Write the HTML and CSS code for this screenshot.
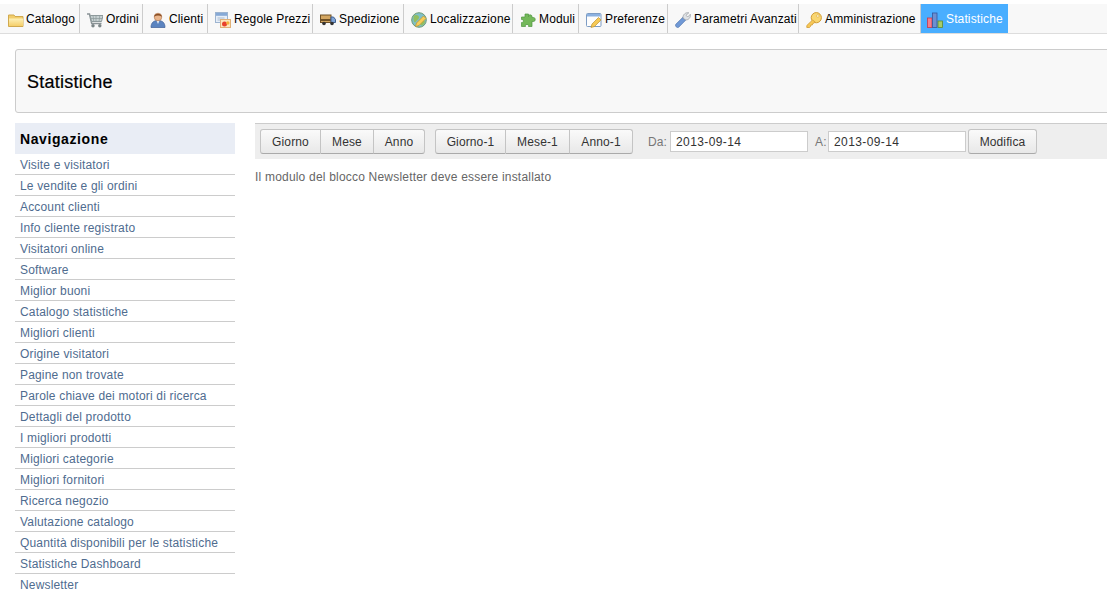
FILE: index.html
```html
<!DOCTYPE html>
<html lang="it">
<head>
<meta charset="utf-8">
<title>Statistiche</title>
<link rel="stylesheet" href="styles.css">
</head>
<body>
<nav class="tabs">
  <a class="tab"><svg class="ico" viewBox="0 0 16 16"><defs><linearGradient id="fold" x1="0" y1="0" x2="0" y2="1"><stop offset="0" stop-color="#fdf1b8"/><stop offset="1" stop-color="#f5cf6a"/></linearGradient></defs><path d="M.5 3h5.500l1 1.500h8v10H.5z" fill="#f2cd6b" stroke="#d0a94e"/><path d="M1 6.500h14v7.500H1z" fill="url(#fold)"/></svg>Catalogo</a>
  <a class="tab"><svg class="ico" viewBox="0 0 16 16"><path d="M0 2h2.500l2.200 9.500h9.800" fill="none" stroke="#8a9396" stroke-width="1.500"/><path d="M3.200 3.500H16l-1.500 6H4.500z" fill="#c7d1d2" stroke="#8d999b"/><path d="M6 3.500l.8 6M9 3.500v6M12.800 3.500l-.8 6M3.800 6.500h11.500" stroke="#8d999b" stroke-width=".7"/><circle cx="6" cy="13.800" r="1.700" fill="#7b8587"/><circle cx="12.800" cy="13.800" r="1.700" fill="#7b8587"/></svg>Ordini</a>
  <a class="tab"><svg class="ico" viewBox="0 0 16 16"><path d="M1 15.500c0-4.800 2.500-7 7-7s7 2.200 7 7z" fill="#5b84c0" stroke="#3d5f96" stroke-width=".7"/><path d="M6.500 8.500h3L8 12z" fill="#e8eef6"/><circle cx="8" cy="5" r="3.800" fill="#e9b58c" stroke="#a9714c" stroke-width=".6"/><path d="M4.200 4.800C4 .6 12 .6 11.800 4.800 9.500 3.200 6.500 3.200 4.200 4.800z" fill="#8a4f25"/></svg>Clienti</a>
  <a class="tab"><svg class="ico" viewBox="0 0 16 16"><rect x=".5" y=".5" width="12" height="10" fill="#e6eef8" stroke="#9db4d0"/><rect x="1" y="1" width="11" height="2.800" fill="#86a9d6"/><path d="M2.500 6h7M2.500 8h4" stroke="#a9bbd0"/><rect x="5.500" y="7.500" width="10" height="8" fill="#fce6bd" stroke="#e0b077"/><circle cx="9.500" cy="12" r="2.500" fill="#e8402c"/><circle cx="12.800" cy="11" r="1.700" fill="#f5b23c"/></svg>Regole Prezzi</a>
  <a class="tab"><svg class="ico" viewBox="0 0 16 16"><rect x=".5" y="3" width="10.500" height="7.500" fill="#d3a661" stroke="#6f5126"/><rect x=".5" y="7" width="10.500" height="2" fill="#6f5126"/><path d="M11 5h2.500l2 2.500v3H11z" fill="#7ea3d6" stroke="#3e5f8f"/><circle cx="4" cy="11.500" r="1.800" fill="#333"/><circle cx="12" cy="11.500" r="1.800" fill="#333"/></svg>Spedizione</a>
  <a class="tab"><svg class="ico" viewBox="0 0 16 16"><circle cx="8" cy="8" r="7.300" fill="#7fc0c8" stroke="#6f9a74"/><path d="M3 3.500c3-1.500 5 0 5 2S5.500 8 4.500 10 1.500 7 3 3.500zM10 9c2-1 4 0 4 1s-2 3.500-3.500 3.500S9 10 10 9z" fill="#93bf5f"/><path d="M4.500 14.500l1-3.500 7-7 2.500 2.500-7 7z" fill="#f7cd58" stroke="#c0922f" stroke-width=".7"/></svg>Localizzazione</a>
  <a class="tab"><svg class="ico" viewBox="0 0 16 16"><path d="M5 2h3.500v2.500c.2-2.500 4-2 3.500.5v.5h1.500c2.300 0 2.300 4 0 4H12v5H8.500c.8-2.800-3.800-2.800-3 0H1.500V10.500c2.500.8 2.500-3.800 0-3V5H5z" fill="#74b85a" stroke="#4f9540" stroke-width=".7"/></svg>Moduli</a>
  <a class="tab"><svg class="ico" viewBox="0 0 16 16"><rect x=".5" y="1.500" width="14.500" height="13" rx="1" fill="#fdfdfd" stroke="#7d9cc4"/><rect x="1" y="2" width="13.500" height="2.500" fill="#8cb1e0"/><path d="M5 15.500l1-3.500 6.500-6.500 2.500 2.500-6.500 6.500z" fill="#f6c955" stroke="#c0922f" stroke-width=".7"/></svg>Preferenze</a>
  <a class="tab"><svg class="ico" viewBox="0 0 16 16"><path d="M.8 12.300L8 5.200l2.800 2.800-7.100 7.200c-1.500 1.300-4.100-1.300-2.900-2.900z" fill="#7099d6" stroke="#4f75ad" stroke-width=".7"/><path d="M8 6C7.500 2.800 10.700 0 13.800.8L11 3.300l1.700 1.700 2.600-2.700c.8 3-2 6.300-5 5.500z" fill="#dfe2e5" stroke="#93989e" stroke-width=".7"/></svg>Parametri Avanzati</a>
  <a class="tab"><svg class="ico" viewBox="0 0 16 16"><circle cx="10.300" cy="5.700" r="5.100" fill="#f9d670" stroke="#d09c36"/><circle cx="11.800" cy="4" r="1.300" fill="#fff6cf" stroke="#d09c36" stroke-width=".5"/><path d="M6.500 8L.8 13.500v2h2.700l1-1 .3-1.500h1.500l.5-1.500 1.500-.5 1-1z" fill="#f7c856" stroke="#d09c36" stroke-width=".8"/></svg>Amministrazione</a>
  <a class="tab tab-active"><svg class="ico" viewBox="0 0 16 16"><rect x=".5" y="6" width="4.500" height="9.500" fill="#f27f8c" stroke="#c8374a" stroke-width=".8"/><rect x="5.500" y="1" width="4.500" height="14.500" fill="#6d8fd0" stroke="#35569c" stroke-width=".8"/><rect x="11" y="9" width="4.500" height="6.500" fill="#a6cb6a" stroke="#5f8a2e" stroke-width=".8"/></svg>Statistiche</a>
</nav>

<header class="page-head">
  <h1 class="page-title">Statistiche</h1>
</header>

<div class="layout">
  <aside class="side">
    <h2 class="side-title">Navigazione</h2>
    <ul class="side-list">
      <li><a>Visite e visitatori</a></li>
      <li><a>Le vendite e gli ordini</a></li>
      <li><a>Account clienti</a></li>
      <li><a>Info cliente registrato</a></li>
      <li><a>Visitatori online</a></li>
      <li><a>Software</a></li>
      <li><a>Miglior buoni</a></li>
      <li><a>Catalogo statistiche</a></li>
      <li><a>Migliori clienti</a></li>
      <li><a>Origine visitatori</a></li>
      <li><a>Pagine non trovate</a></li>
      <li><a>Parole chiave dei motori di ricerca</a></li>
      <li><a>Dettagli del prodotto</a></li>
      <li><a>I migliori prodotti</a></li>
      <li><a>Migliori categorie</a></li>
      <li><a>Migliori fornitori</a></li>
      <li><a>Ricerca negozio</a></li>
      <li><a>Valutazione catalogo</a></li>
      <li><a>Quantità disponibili per le statistiche</a></li>
      <li><a>Statistiche Dashboard</a></li>
      <li><a>Newsletter</a></li>
    </ul>
  </aside>
  <main class="content">
    <form class="toolbar">
      <div class="btn-group group-now">
        <button type="button" class="btn">Giorno</button>
        <button type="button" class="btn">Mese</button>
        <button type="button" class="btn">Anno</button>
      </div>
      <div class="btn-group group-prev">
        <button type="button" class="btn">Giorno-1</button>
        <button type="button" class="btn">Mese-1</button>
        <button type="button" class="btn">Anno-1</button>
      </div>
      <label class="date-label label-from">Da:</label>
      <input class="date" type="text" value="2013-09-14">
      <label class="date-label label-to">A:</label>
      <input class="date" type="text" value="2013-09-14">
      <button type="button" class="btn btn-solo">Modifica</button>
    </form>
    <p class="message">Il modulo del blocco Newsletter deve essere installato</p>
  </main>
</div>
</body>
</html>
```
FILE: styles.css
```css
* { box-sizing: border-box; }
html, body { height: 100%; }
body {
  margin: 0;
  padding-top: 4px;
  overflow: hidden;
  background: #fff;
  color: #666;
  font: 12px/15px "Liberation Sans", Arial, sans-serif;
  letter-spacing: .13px;
}
.tabs {
  display: grid;
  grid-template-columns: 80px 63px 65px 105px 91px 109px 66px 89px 131px 122px 87px;
  height: 30px;
  background: #f8f8f8;
  border-bottom: 1px solid #ddd;
}
.tab {
  display: flex;
  align-items: center;
  gap: 3px;
  padding: 2px 0 0 7px;
  border-right: 1px solid #ccc;
  color: #000;
  white-space: nowrap;
}
.tab:first-child { gap: 2px; padding-left: 8px; }
.ico { width: 16px; height: 16px; flex: none; }
.tab-active {
  background: #49aeff;
  color: #fff;
  border-right: 0;
  padding-left: 6px;
}
.page-head {
  display: flex;
  align-items: center;
  height: 64px;
  margin: 15px -20px 0 15px;
  padding: 2px 0 0 11px;
  background: #f8f8f8;
  border: 1px solid #ccc;
  border-radius: 3px;
}
.page-title {
  margin: 0;
  font-size: 18px;
  font-weight: 400;
  letter-spacing: .25px;
  color: #000;
  -webkit-text-stroke: .2px #000;
}
.layout {
  display: flex;
  gap: 20px;
  margin: 10px 0 0 15px;
}
.side { width: 220px; flex: none; }
.side-title {
  margin: 0;
  height: 31px;
  padding: 1px 0 0 5px;
  background: #e9edf5;
  color: #000;
  font-size: 14px;
  line-height: 31px;
  font-weight: 700;
  letter-spacing: .6px;
}
.side-list { margin: 0; padding: 0; list-style: none; letter-spacing: .17px; }
.side-list li {
  height: 21px;
  padding: 1px 0 0 5px;
  border-bottom: 1px solid #ccc;
  line-height: 20px;
  color: #4f6c8f;
}
.side-list li:last-child { border-bottom: 0; }
.content { flex: 1; min-width: 0; }
.toolbar {
  display: flex;
  align-items: center;
  height: 36px;
  padding-left: 5px;
  background: #eee;
  border-top: 1px solid #ccc;
}
.btn-group { display: grid; }
.group-now { grid-template-columns: 61px 53px 51px; }
.group-prev { grid-template-columns: 71px 64px 63px; margin-left: 10px; }
.btn {
  height: 25px;
  padding: 2px 0 0;
  border: 1px solid #c4c4c4;
  border-bottom-color: #aaa;
  border-left-width: 0;
  background: linear-gradient(#fafafa, #e8e8e8);
  color: #333;
  font: inherit;
  letter-spacing: inherit;
}
.btn:first-child { border-left-width: 1px; border-radius: 3px 0 0 3px; }
.btn:last-child { border-radius: 0 3px 3px 0; }
.btn.btn-solo { width: 69px; border-left-width: 1px; border-radius: 3px; margin-left: 2px; }
.date-label { padding-top: 2px; color: #777; }
.label-from { width: 22px; margin-left: 15px; }
.label-to { width: 13px; margin-left: 7px; }
.date {
  width: 138px;
  height: 21px;
  padding: 0 5px;
  border: 1px solid #ccc;
  background: #fff;
  color: #333;
  font: inherit;
  letter-spacing: .4px;
}
.message { margin: 11px 0 0; letter-spacing: .2px; }
```
